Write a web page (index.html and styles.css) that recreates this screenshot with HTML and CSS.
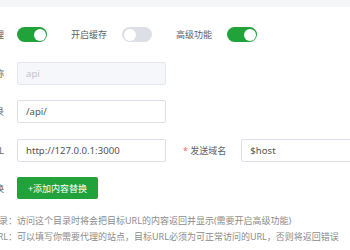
FILE: index.html
```html
<!DOCTYPE html>
<html>
<head>
    <title>反向代理</title>
    <meta name="viewport" content="width=device-width, initial-scale=1">
    <link rel="stylesheet" href="styles.css">
</head>
<body>
    <div class="top-band"></div>
    <div class="proxy-form">
        <div class="form-row">
            <label class="form-label">开启代理</label>
            <div class="form-field switches">
                <span class="switch on"><span class="knob"></span></span>
                <span class="switch-label">开启缓存</span>
                <span class="switch"><span class="knob"></span></span>
                <span class="switch-label">高级功能</span>
                <span class="switch on"><span class="knob"></span></span>
            </div>
        </div>
        <div class="form-row">
            <label class="form-label">代理名称</label>
            <div class="form-field">
                <input class="text-input" type="text" value="api" disabled>
            </div>
        </div>
        <div class="form-row">
            <label class="form-label">代理目录</label>
            <div class="form-field">
                <input class="text-input" type="text" value="/api/">
            </div>
        </div>
        <div class="form-row">
            <label class="form-label">目标URL</label>
            <div class="form-field">
                <input class="text-input" type="text" value="http://127.0.0.1:3000">
                <label class="inline-label"><span class="required">*</span> 发送域名</label>
                <input class="text-input wide" type="text" value="$host">
            </div>
        </div>
        <div class="form-row button-row">
            <label class="form-label">内容替换</label>
            <div class="form-field">
                <button class="add-btn">+添加内容替换</button>
            </div>
        </div>
        <ul class="tips">
            <li><span class="tip-name">代理目录：</span>访问这个目录时将会把目标URL的内容返回并显示(需要开启高级功能)</li>
            <li><span class="tip-name">目标URL：</span>可以填写你需要代理的站点，目标URL必须为可正常访问的URL，否则将返回错误</li>
        </ul>
    </div>
</body>
</html>
```

FILE: styles.css
```css
html, body {
    margin: 0;
    padding: 0;
    background: #fff;
    overflow: hidden;
}
body {
    font-family: "Noto Sans", "Noto Sans CJK SC", sans-serif;
    font-size: 9px;
    color: #606266;
}
.top-band {
    height: 7px;
    background: #f5f6f7;
}
.proxy-form {
    margin-left: -55px;
    padding-top: 16px;
    overflow: hidden;
}
.form-row {
    display: flex;
    align-items: center;
    height: 23px;
    margin-bottom: 15.5px;
}
.form-label {
    box-sizing: border-box;
    width: 72px;
    padding-right: 13px;
    text-align: right;
    white-space: nowrap;
    flex-shrink: 0;
}
.form-field {
    display: flex;
    align-items: center;
    flex-shrink: 0;
}
.switches .switch-label {
    margin: 0 15px 0 24px;
    white-space: nowrap;
}
.switch {
    position: relative;
    display: inline-block;
    flex-shrink: 0;
    width: 30px;
    height: 15px;
    border-radius: 8px;
    background: #dcdfe6;
}
.switch.on {
    background: #21a23a;
}
.switch .knob {
    position: absolute;
    top: 1.5px;
    left: 1.5px;
    width: 12px;
    height: 12px;
    border-radius: 50%;
    background: #fff;
}
.switch.on .knob {
    left: 16.5px;
}
.text-input {
    box-sizing: border-box;
    flex-shrink: 0;
    width: 149px;
    height: 23px;
    padding: 0 8px;
    border: 1px solid #dcdfe6;
    border-radius: 2px;
    font-family: "Noto Sans", "Noto Sans CJK SC", sans-serif;
    font-size: 9.6px;
    color: #555;
    outline: none;
    background: #fff;
}
.text-input:disabled {
    background: #f5f7fa;
    border-color: #e4e7ed;
    color: #c0c4cc;
}
.text-input.wide {
    width: 160px;
}
.inline-label {
    margin: 0 15px 0 17px;
    white-space: nowrap;
    flex-shrink: 0;
}
.required {
    color: #f56c6c;
}
.button-row {
    margin-top: 6px;
    margin-bottom: 0;
    height: 22px;
}
.add-btn {
    width: 81px;
    height: 22px;
    border: none;
    border-radius: 2px;
    background: #21a23a;
    color: #fff;
    font-family: "Noto Sans", "Noto Sans CJK SC", sans-serif;
    font-size: 9px;
    padding: 0;
    cursor: pointer;
}
.tips {
    list-style: none;
    margin: 14px 0 0 0;
    padding: 0;
    color: #8c8c8c;
    white-space: nowrap;
}
.tips li {
    display: flex;
    line-height: 16px;
}
.tips .tip-name {
    width: 72px;
    text-align: right;
    flex-shrink: 0;
}
```
